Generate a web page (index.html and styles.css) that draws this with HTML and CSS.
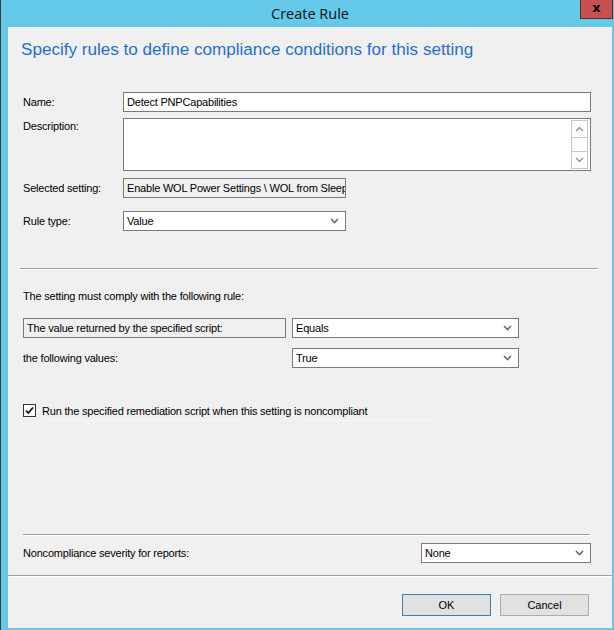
FILE: index.html
```html
<!DOCTYPE html>
<html>
<head>
<meta charset="utf-8">
<link rel="stylesheet" href="styles.css">
</head>
<body>
<div class="window">
  <div class="titlebar">
    <span class="title">Create Rule</span>
    <div class="close">x</div>
  </div>
  <div class="client">
    <h1 class="heading">Specify rules to define compliance conditions for this setting</h1>
    <div class="form">
      <div class="row row-name">
        <label class="lbl">Name:</label>
        <div class="input wide">Detect PNPCapabilities</div>
      </div>
      <div class="row row-desc">
        <label class="lbl lbl-top">Description:</label>
        <div class="textarea wide">
          <div class="vscroll">
            <div class="sb-btn"><svg width="9" height="6" viewBox="0 0 9 6"><polyline points="1,5 4.5,1.5 8,5" fill="none" stroke="#8a8a8a" stroke-width="1.2"/></svg></div>
            <div class="sb-track"></div>
            <div class="sb-btn"><svg width="9" height="6" viewBox="0 0 9 6"><polyline points="1,1 4.5,4.5 8,1" fill="none" stroke="#8a8a8a" stroke-width="1.2"/></svg></div>
          </div>
        </div>
      </div>
      <div class="row row-setting">
        <label class="lbl">Selected setting:</label>
        <div class="input readonly narrow">Enable WOL Power Settings \ WOL from Sleep</div>
      </div>
      <div class="row row-type">
        <label class="lbl">Rule type:</label>
        <div class="select narrow"><span>Value</span><svg class="chev" width="9" height="6" viewBox="0 0 9 6"><polyline points="1,1 4.5,4.5 8,1" fill="none" stroke="#6a6a6a" stroke-width="1.6"/></svg></div>
      </div>
    </div>
    <div class="sep sep-1"></div>
    <p class="comply">The setting must comply with the following rule:</p>
    <div class="rule-row rule-first">
      <div class="rule-box">The value returned by the specified script:</div>
      <div class="select rule-select"><span>Equals</span><svg class="chev" width="9" height="6" viewBox="0 0 9 6"><polyline points="1,1 4.5,4.5 8,1" fill="none" stroke="#6a6a6a" stroke-width="1.6"/></svg></div>
    </div>
    <div class="rule-row rule-second">
      <div class="rule-label">the following values:</div>
      <div class="select rule-select"><span>True</span><svg class="chev" width="9" height="6" viewBox="0 0 9 6"><polyline points="1,1 4.5,4.5 8,1" fill="none" stroke="#6a6a6a" stroke-width="1.6"/></svg></div>
    </div>
    <div class="check-row">
      <div class="checkbox"><svg width="11" height="11" viewBox="0 0 11 11"><polyline points="2,5.5 4.3,8 9,2.5" fill="none" stroke="#111" stroke-width="1.8"/></svg></div>
      <span class="check-label">Run the specified remediation script when this setting is noncompliant</span>
    </div>
    <div class="ghost-lines"><span class="g1"></span><span class="g2"></span></div>
    <div class="spacer"></div>
    <div class="sep sep-2"></div>
    <div class="severity-row">
      <span class="sev-label">Noncompliance severity for reports:</span>
      <div class="select sev-select"><span>None</span><svg class="chev" width="9" height="6" viewBox="0 0 9 6"><polyline points="1,1 4.5,4.5 8,1" fill="none" stroke="#6a6a6a" stroke-width="1.6"/></svg></div>
    </div>
    <div class="footer">
      <button class="btn btn-default">OK</button>
      <button class="btn">Cancel</button>
    </div>
  </div>
</div>
</body>
</html>
```
FILE: styles.css
```css
* { box-sizing: border-box; }
html, body { margin: 0; padding: 0; }
body {
  width: 614px;
  height: 630px;
  overflow: hidden;
  font-family: "Liberation Sans", Arial, sans-serif;
  font-size: 11px;
  letter-spacing: -0.2px;
  color: #000;
}
.window {
  width: 614px;
  height: 630px;
  background: #65c9e9;
  border-left: 1px solid #3b3b3b;
  display: flex;
  flex-direction: column;
}
.titlebar {
  height: 27px;
  flex: none;
  position: relative;
  display: flex;
  justify-content: center;
  align-items: center;
}
.title {
  font-family: "Open Sans", "Liberation Sans", sans-serif;
  font-size: 14.5px;
  letter-spacing: 0;
  color: #111;
  margin-left: 5px;
  margin-top: -1px;
}
.close {
  position: absolute;
  top: 0;
  right: 1px;
  width: 33px;
  height: 19px;
  background: #c75050;
  border: 1px solid #4f2a2a;
  border-top: none;
  color: #000;
  font-weight: bold;
  font-size: 13px;
  letter-spacing: 0;
  line-height: 15px;
  text-align: center;
  font-family: "DejaVu Sans", sans-serif;
}
.client {
  flex: 1;
  margin: 0 2px 2px 7px;
  background: #f0f0f0;
  display: flex;
  flex-direction: column;
  position: relative;
}
.heading {
  margin: 13px 0 0 13px;
  font-family: "Liberation Sans", Arial, sans-serif;
  font-weight: normal;
  font-size: 17.1px;
  letter-spacing: 0;
  color: #1f6fd6;
  line-height: 20px;
}
.form {
  margin: 32px 0 0 15px;
  display: flex;
  flex-direction: column;
}
.row {
  display: flex;
  align-items: center;
}
.lbl {
  width: 100px;
  flex: none;
  white-space: nowrap;
}
.row-desc { align-items: flex-start; margin-top: 6px; }
.lbl-top { margin-top: 2px; }
.row-setting { margin-top: 7px; }
.row-type { margin-top: 13px; }
.input {
  height: 20px;
  border: 1px solid #7a7a7a;
  background: #fff;
  padding: 0 0 0 3px;
  line-height: 18px;
  white-space: nowrap;
  overflow: hidden;
}
.wide { width: 468px; }
.narrow { width: 223px; }
.readonly { background: #f0f0f0; }
.textarea {
  height: 53px;
  border: 1px solid #7a7a7a;
  background: #fff;
  display: flex;
  justify-content: flex-end;
  padding: 1px 2px 1px 0;
}
.vscroll {
  width: 17px;
  display: flex;
  flex-direction: column;
  border: 1px solid #c8c8c8;
  background: #fff;
}
.sb-btn {
  height: 16px;
  display: flex;
  align-items: center;
  justify-content: center;
}
.sb-track {
  flex: 1;
  border-top: 1px solid #c8c8c8;
  border-bottom: 1px solid #c8c8c8;
}
.select {
  height: 20px;
  border: 1px solid #7a7a7a;
  background: #fff;
  display: flex;
  align-items: center;
  justify-content: space-between;
  padding: 0 6px 0 3px;
}
.chev { flex: none; }
.sep {
  height: 1px;
  background: #a0a0a0;
  border-bottom: 1px solid #fff;
  box-sizing: content-box;
}
.sep-1 { margin: 37px 14px 0 12px; }
.comply { margin: 19px 0 0 15px; line-height: 14px; }
.rule-row {
  display: flex;
  align-items: center;
  margin-left: 15px;
}
.rule-first { margin-top: 15px; }
.rule-second { margin-top: 10px; }
.rule-box {
  width: 263px;
  height: 20px;
  border: 1px solid #7a7a7a;
  background: #f0f0f0;
  padding-left: 3px;
  line-height: 18px;
}
.rule-label {
  width: 263px;
}
.rule-select {
  width: 227px;
  margin-left: 6px;
}
.check-row {
  display: flex;
  align-items: center;
  margin: 36px 0 0 15px;
}
.checkbox {
  width: 13px;
  height: 13px;
  border: 1px solid #333;
  background: #fff;
  display: flex;
  align-items: center;
  justify-content: center;
}
.check-label { margin-left: 6px; }
.ghost-lines {
  position: relative;
  height: 1px;
  margin-top: 3px;
}
.ghost-lines span {
  position: absolute;
  top: 0;
  height: 1px;
  background: #f8f8f8;
}
.g1 { left: 37px; width: 195px; }
.g2 { left: 295px; width: 128px; }
.spacer { flex: 1; }
.sep-2 { margin: 0 22px 0 15px; }
.severity-row {
  display: flex;
  align-items: center;
  justify-content: space-between;
  margin: 7px 21px 0 15px;
}
.sev-select { width: 170px; }
.footer {
  margin-top: 12px;
  height: 53px;
  border-top: 1px solid #a0a0a0;
  box-shadow: inset 0 1px 0 #fff;
  display: flex;
  justify-content: flex-end;
  align-items: flex-start;
  padding: 18px 23px 0 0;
  gap: 9px;
}
.btn {
  width: 89px;
  height: 22px;
  background: #e1e1e1;
  border: 1px solid #adadad;
  font-family: "Liberation Sans", Arial, sans-serif;
  font-size: 11px;
  color: #000;
  padding: 0;
  margin: 0;
}
.btn-default { border-color: #3c7fb1; }
```
